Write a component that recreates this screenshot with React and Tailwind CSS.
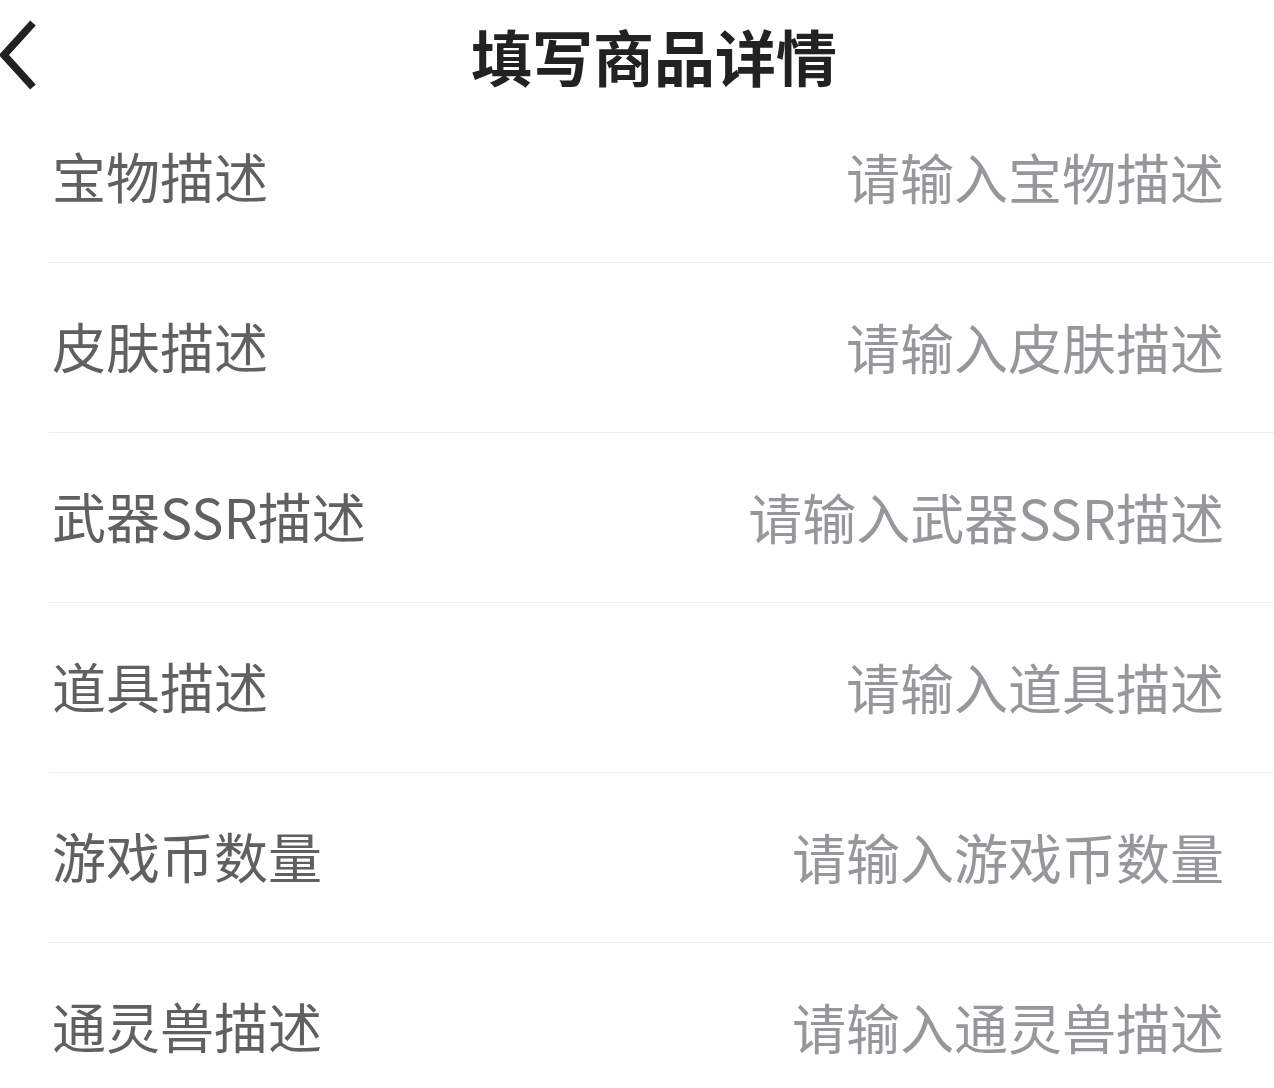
import React from 'react';

const rows = [
  { label: '宝物描述', placeholder: '请输入宝物描述' },
  { label: '皮肤描述', placeholder: '请输入皮肤描述' },
  { label: '武器SSR描述', placeholder: '请输入武器SSR描述' },
  { label: '道具描述', placeholder: '请输入道具描述' },
  { label: '游戏币数量', placeholder: '请输入游戏币数量' },
  { label: '通灵兽描述', placeholder: '请输入通灵兽描述' },
];

const font = { fontFamily: '"Noto Sans CJK SC", "Noto Sans", sans-serif' };

const App = () => {
  return (
    <div className="min-h-screen bg-white" style={font}>
      {/* header */}
      <div className="h-[93px] pt-[18px] flex items-center relative">
        <button className="absolute left-0 top-[20px] w-[40px] h-[70px] flex items-center">
          <svg width="38" height="70" viewBox="0 0 38 70" fill="none" className="shrink-0">
            <path d="M33 3 L4 35 L33 67" stroke="#222222" strokeWidth="7.5" strokeLinecap="butt" strokeLinejoin="miter" />
          </svg>
        </button>
        <h1 className="flex-1 text-center pl-[34px] text-[61px] leading-none font-bold text-[#222222]">
          填写商品详情
        </h1>
      </div>

      {/* form rows */}
      <div>
        {rows.map((row) => (
          <div
            key={row.label}
            className="ml-[49px] h-[170px] pl-[3px] pr-[50px] pb-[3px] flex items-center justify-between border-b border-[#eeeeee]"
          >
            <span className="text-[54px] leading-none text-[#5f6062]">{row.label}</span>
            <input
              type="text"
              placeholder={row.placeholder}
              className="flex-1 min-w-0 text-right text-[54px] leading-none text-[#5f6062] placeholder:text-[#96979b] outline-none bg-transparent"
              style={font}
            />
          </div>
        ))}
      </div>
    </div>
  );
};

export default App;
